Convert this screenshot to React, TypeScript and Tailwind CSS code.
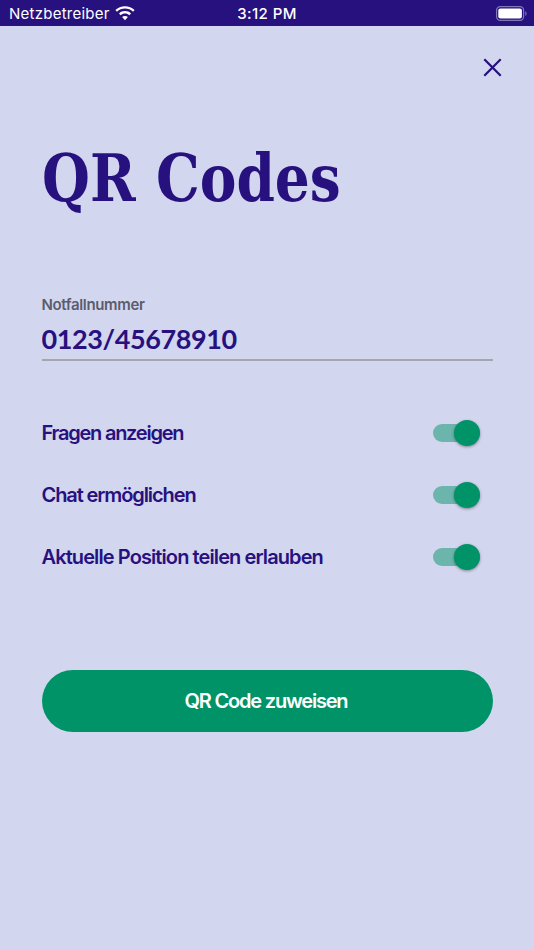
import { useState } from 'react';

interface ToggleRowProps {
  label: string;
  tracking: string;
}

function ToggleRow({ label, tracking }: ToggleRowProps) {
  const [on, setOn] = useState(true);

  return (
    <div className="flex h-[62px] items-center justify-between pr-[13px]">
      <span className={`whitespace-nowrap text-[20px] leading-6 font-semibold ${tracking}`}>{label}</span>
      <button
        type="button"
        role="switch"
        aria-checked={on}
        aria-label={label}
        onClick={() => setOn(!on)}
        className={`mb-px flex h-[18px] w-[47px] items-center rounded-full ${on ? 'justify-end bg-[#6bb5ad]' : 'justify-start bg-gray-400'}`}
      >
        <span className={`size-[26px] shrink-0 rounded-full shadow-[0_1px_3px_rgba(0,0,0,0.4)] ${on ? 'bg-[#009367]' : 'bg-white'}`} />
      </button>
    </div>
  );
}

function WifiIcon() {
  return (
    <svg className="h-[15px] w-5" viewBox="0 0 20 15" fill="white">
      <path d="M10 .2C6.300.2 2.900 1.600.4 4L2 5.700C4.100 3.700 6.900 2.600 10 2.600S15.900 3.700 18 5.700L19.600 4C17.100 1.600 13.700.2 10 .2Z" />
      <path d="M10 5.100C7.700 5.100 5.600 5.900 4 7.400L5.700 9.200C6.900 8.100 8.300 7.500 10 7.500S13.100 8.100 14.300 9.200L16 7.400C14.400 5.900 12.300 5.100 10 5.100Z" />
      <path d="M10 9.900C8.900 9.900 7.900 10.300 7.100 11L10 14.200 12.900 11C12.100 10.300 11.100 9.900 10 9.900Z" />
    </svg>
  );
}

function BatteryIcon() {
  return (
    <svg className="h-[15px] w-8" viewBox="0 0 32 15" fill="none">
      <rect x=".6" y=".6" width="27" height="13.800" rx="3.600" stroke="#8278b8" strokeWidth="1.200" />
      <rect x="2.300" y="2.500" width="23.600" height="10" rx="2" fill="white" />
      <path d="M29.300 5.200C31 5.800 31 9.300 29.300 9.900Z" fill="#8278b8" />
    </svg>
  );
}

const toggles = [
  { label: 'Fragen anzeigen', tracking: 'tracking-[-1.25px]' },
  { label: 'Chat ermöglichen', tracking: 'tracking-[-1.1px]' },
  { label: 'Aktuelle Position teilen erlauben', tracking: 'tracking-[-0.9px]' },
];

export default function App() {
  return (
    <div className="flex h-[950px] w-[534px] flex-col overflow-hidden bg-[#d3d6ef] font-['Inter',sans-serif] text-[#27117f]">
      {/* Status bar */}
      <header className="grid h-[26px] shrink-0 grid-cols-3 items-center bg-[#27117f] pt-px pl-[9px] text-white">
        <div className="flex items-center gap-[5px] text-[15px] leading-6">
          <span className="tracking-[0.25px]">Netzbetreiber</span>
          <WifiIcon />
        </div>
        <span className="pr-[9px] text-center text-[15px] leading-6 font-medium tracking-[0.4px]">3:12 PM</span>
        <div className="flex justify-end pr-[6px]">
          <BatteryIcon />
        </div>
      </header>

      <div className="flex h-[82px] shrink-0 justify-end pt-8 pr-8">
        <button type="button" aria-label="Schließen" className="size-[19px]">
          <svg className="size-[19px]" viewBox="0 0 19 19" stroke="#27117f" strokeWidth="2.300">
            <path d="M1.300 1.300 17.700 17.700M17.700 1.300 1.300 17.700" />
          </svg>
        </button>
      </div>

      <main className="flex flex-col px-[41.500px]">
        <h1 className="mt-[30px] flex h-[80px] whitespace-nowrap font-['DejaVu_Serif_Condensed','DejaVu_Serif',serif] text-[65px] leading-[80px] font-bold">
          <span className="w-[114px] origin-left scale-x-[0.94]">QR </span>
          <span className="origin-left scale-x-[0.94]">Codes</span>
        </h1>

        <label className="mt-[77px] flex flex-col">
          <span className="text-[15px] leading-5 font-semibold tracking-[-0.35px] text-[#5b5c6c]">Notfallnummer</span>
          <input
            defaultValue="0123/45678910"
            className="mt-1 h-[42px] border-b-2 border-[#a5a5b0] bg-transparent pb-0.5 font-['Lato',sans-serif] text-[27px] font-bold tracking-[-0.4px] outline-none"
          />
        </label>

        <div className="mt-[41px] flex flex-col">
          {toggles.map((t) => (
            <ToggleRow key={t.label} {...t} />
          ))}
        </div>

        <button
          type="button"
          className="mt-[82px] h-[62px] rounded-full bg-[#009367] pr-[2px] text-[20px] font-semibold tracking-[-1.2px] text-white"
        >
          QR Code zuweisen
        </button>
      </main>
    </div>
  );
}
